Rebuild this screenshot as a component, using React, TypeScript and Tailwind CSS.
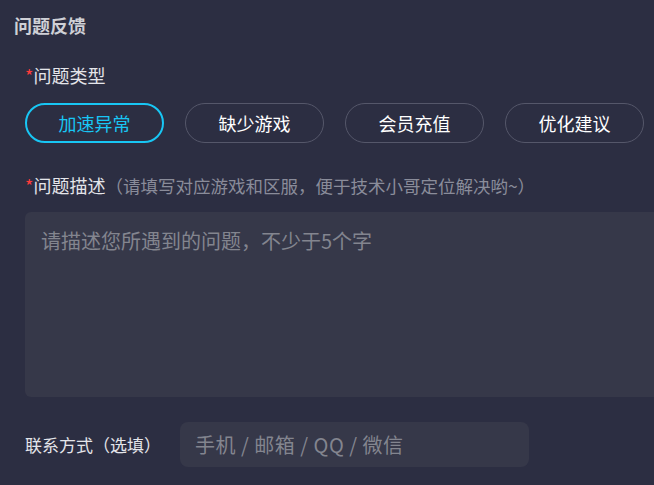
import React from "react";

const font = { fontFamily: '"Microsoft YaHei", "Noto Sans CJK SC", "Noto Sans", sans-serif' };

export default function App() {
  const types = ["加速异常", "缺少游戏", "会员充值", "优化建议"];
  return (
    <div className="w-[654px] h-[485px] overflow-hidden bg-[#2c2e42]" style={font}>
      <div className="w-[700px] pl-[14px] pt-[12px]">
        <div className="text-[18px] leading-[26px] font-bold text-[#cfd0d6]">问题反馈</div>
        <div className="pl-[11px]">
          <div className="mt-[24px] text-[18px] leading-[26px] text-[#e4e5ea]">
            <span className="text-[#ff3b3b]">*</span>问题类型
          </div>
          <div className="mt-[15px] flex gap-[21px]">
            {types.map((t, i) => (
              <div
                key={t}
                className={
                  i === 0
                    ? "w-[139px] h-[40px] rounded-full border-2 border-[#18c6f4] text-[#18c6f4] flex items-center justify-center text-[18px]"
                    : "w-[139px] h-[40px] rounded-full border border-[#55576a] text-white flex items-center justify-center text-[18px]"
                }
              >
                {t}
              </div>
            ))}
          </div>
          <div className="mt-[29px] flex items-baseline leading-[26px]">
            <span className="text-[18px] text-[#e4e5ea]">
              <span className="text-[#ff3b3b]">*</span>问题描述
            </span>
            <span className="text-[17.5px] text-[#8a8c9a]">（请填写对应游戏和区服，便于技术小哥定位解决哟~）</span>
          </div>
          <div className="mt-[13px] h-[185px] w-[660px] rounded-[6px] bg-[#363849] px-[16px] pt-[15px] text-[20px] leading-[28px] text-[#83858f]">
            请描述您所遇到的问题，不少于5个字
          </div>
          <div className="mt-[25px] flex items-center">
            <div className="w-[155px] text-[17px] text-[#e4e5ea]">联系方式（选填）</div>
            <div className="w-[349px] h-[45px] rounded-[8px] bg-[#363849] flex items-center px-[15px] text-[20px] tracking-[0.5px] text-[#83858f]">
              手机 / 邮箱 / QQ / 微信
            </div>
          </div>
        </div>
      </div>
    </div>
  );
}
